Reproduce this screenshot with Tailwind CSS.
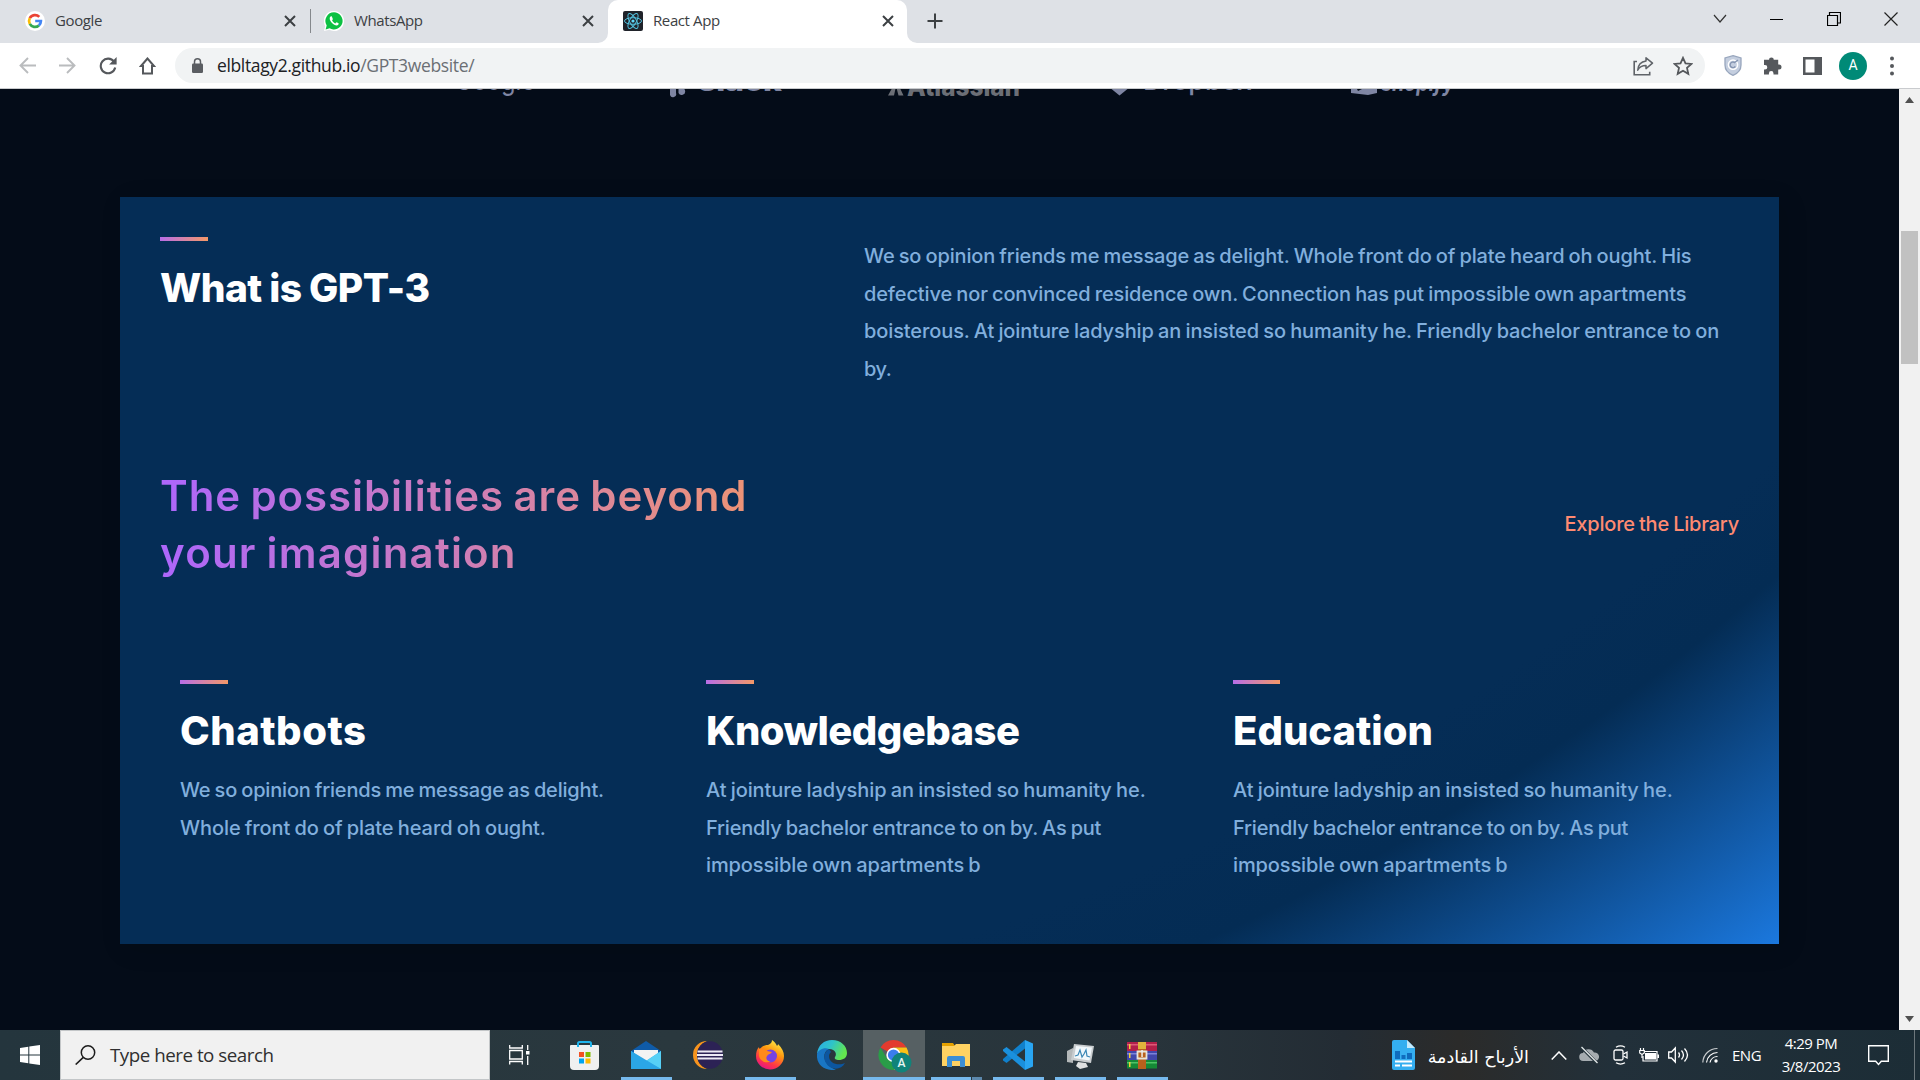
<!DOCTYPE html>
<html lang="en">
<head>
<meta charset="utf-8">
<title>React App</title>
<script src="https://cdn.jsdelivr.net/npm/@tailwindcss/browser@4"></script>
</head>
<body class="w-[1920px] h-[1080px] overflow-hidden flex flex-col bg-[#040c18] font-['Open_Sans',sans-serif]">

<!-- Tab strip -->
<header class="h-[43px] shrink-0 bg-[#dee1e6] flex justify-between text-[15px] text-[#3c4043]">
  <div class="flex">
    <div class="w-[310px] h-[42px] pl-[25px] pr-[14px] flex items-center">
      <svg class="w-5 h-5 shrink-0" viewBox="0 0 20 20"><circle cx="10" cy="10" r="10" fill="#fff"/><g fill="none" stroke-width="2.7"><path d="M14.3 5.9A5.9 5.9 0 0 0 4.8 7.2" stroke="#ea4335"/><path d="M4.8 7.2A5.9 5.9 0 0 0 4.8 12.8" stroke="#fbbc05"/><path d="M4.8 12.8A5.9 5.9 0 0 0 13.9 14.4" stroke="#34a853"/><path d="M13.9 14.4A5.9 5.9 0 0 0 15.9 10H10.2" stroke="#4285f4"/></g></svg>
      <span class="ml-[10px] mb-0.5 tracking-[-0.4px] whitespace-nowrap">Google</span>
      <svg class="ml-auto w-3 h-3" viewBox="0 0 12 12"><path d="M1 1l10 10M11 1L1 11" stroke="#3c4043" stroke-width="2"/></svg>
    </div>
    <div class="w-[298px] h-[42px] pr-[14px] flex items-center">
      <div class="w-px h-6 bg-[#85888c]"></div>
      <svg class="ml-[13px] w-5 h-5 shrink-0" viewBox="0 0 20 20"><path d="M10 0a10 10 0 1 1-4.7 18.8L0 20l1.2-5A10 10 0 0 1 10 0z" fill="#fff"/><path d="M10 1.3a8.6 8.6 0 1 1-4.4 16L1.6 18.4l1.1-4A8.6 8.6 0 0 1 10 1.300z" fill="#0cc143"/><path d="M7.200 5.300c-.6 0-1.500.8-1.500 2.200 0 3 4 6.900 7 6.900 1.300 0 2-.9 2-1.800 0-.4-1.900-1.300-2.200-1.300-.4 0-.8 1.100-1.200 1.100-.9-.2-2.900-2-3.200-3 0-.4.700-.7.700-1.200 0-.4-.8-2.700-1.100-2.900z" fill="#fff"/></svg>
      <span class="ml-[10px] mb-0.5 tracking-[-0.4px] whitespace-nowrap">WhatsApp</span>
      <svg class="ml-auto w-3 h-3" viewBox="0 0 12 12"><path d="M1 1l10 10M11 1L1 11" stroke="#3c4043" stroke-width="2"/></svg>
    </div>
    <div class="relative w-[299px] h-[43px] pb-px rounded-t-[10px] bg-white pl-[15px] pr-[13px] flex items-center">
      <svg class="absolute -left-[10px] bottom-0 w-[10px] h-[10px]" viewBox="0 0 10 10"><path d="M10 0v10H0A10 10 0 0 0 10 0z" fill="#fff"/></svg>
      <svg class="absolute -right-[10px] bottom-0 w-[10px] h-[10px]" viewBox="0 0 10 10"><path d="M0 0v10h10A10 10 0 0 1 0 0z" fill="#fff"/></svg>
      <svg class="w-5 h-5 shrink-0" viewBox="0 0 20 20"><rect width="20" height="20" rx="2" fill="#20232a"/><g fill="none" stroke="#53c1de" stroke-width="1"><ellipse cx="10" cy="10" rx="8.500" ry="3.300"/><ellipse cx="10" cy="10" rx="8.500" ry="3.300" transform="rotate(60 10 10)"/><ellipse cx="10" cy="10" rx="8.500" ry="3.300" transform="rotate(120 10 10)"/></g><circle cx="10" cy="10" r="1.600" fill="#61dafb"/></svg>
      <span class="ml-[10px] mb-0.5 tracking-[-0.4px] whitespace-nowrap">React App</span>
      <svg class="ml-auto w-3 h-3" viewBox="0 0 12 12"><path d="M1 1l10 10M11 1L1 11" stroke="#3c4043" stroke-width="2"/></svg>
    </div>
    <svg class="ml-5 mt-[13px] w-4 h-4" viewBox="0 0 16 16"><path d="M8 .5v15M.5 8h15" stroke="#3c4043" stroke-width="2"/></svg>
  </div>
  <div class="flex h-[37px] items-center pr-[22px] gap-[43px]">
    <svg class="w-[14px] h-[9px]" viewBox="0 0 14 9"><path d="M1 1l6 7 6-7" fill="none" stroke="#333" stroke-width="1.200"/></svg>
    <svg class="w-[14px] h-[14px]" viewBox="0 0 14 14"><path d="M0 7.500h13" stroke="#000"/></svg>
    <svg class="w-[14px] h-[14px]" viewBox="0 0 14 14"><path d="M.5 3.500h10v10H.5zM2.500 3V.5h11v10.500H11" fill="none" stroke="#000" stroke-width="1.200"/></svg>
    <svg class="w-[14px] h-[14px]" viewBox="0 0 14 14"><path d="M.5.5l13 13M13.500.5l-13 13" stroke="#222" stroke-width="1.200"/></svg>
  </div>
</header>

<!-- Toolbar -->
<nav class="h-[46px] shrink-0 bg-white border-b border-[#c9cbce] pt-[5px] flex">
  <div class="w-[175px] h-[35px] pl-[19px] flex items-center">
    <svg class="w-[17px] h-[17px]" viewBox="0 0 17 17"><path d="M17 8.500H1.500M9 1L1.500 8.500 9 16" fill="none" stroke="#babcbe" stroke-width="1.900"/></svg>
    <svg class="ml-[23px] w-[17px] h-[17px]" viewBox="0 0 17 17"><path d="M0 8.500h15.500M8 1l7.500 7.500L8 16" fill="none" stroke="#babcbe" stroke-width="1.900"/></svg>
    <svg class="ml-[23px] w-[18px] h-[18px]" viewBox="0 0 18 18"><path d="M15 4.700A7.300 7.300 0 1 0 16.200 10.500" fill="none" stroke="#55585c" stroke-width="2.100"/><path d="M17.600 0v7.500h-7.500z" fill="#55585c"/></svg>
    <svg class="ml-[22px] w-[17px] h-[18px]" viewBox="0 0 17 18"><path d="M8.500 1.500L2 9h2v7.500h9V9h2z" fill="none" stroke="#55585c" stroke-width="2"/></svg>
  </div>
  <div class="w-[1530px] h-[35px] rounded-full bg-[#f1f3f4] pl-[17px] pr-[12px] flex items-center">
    <svg class="w-[11px] h-4" viewBox="0 0 11 16"><rect y="5.500" width="11" height="9.500" rx="1.200" fill="#5a5d62"/><path d="M2.500 6V3.800a3 3 0 0 1 6 0V6" fill="none" stroke="#5a5d62" stroke-width="1.500"/></svg>
    <span class="ml-[14px] text-[17.5px] tracking-[-0.36px] whitespace-nowrap text-[#202124]">elbltagy2.github.io<span class="text-[#6b6f74]">/GPT3website/</span></span>
    <svg class="ml-auto w-[21px] h-[20px]" viewBox="0 0 21 20"><path d="M4 5.500H1.200v13.300h15.500v-3" fill="none" stroke="#5f6368" stroke-width="1.600"/><path d="M13 1.800l6.500 5.400-6.500 5.400V9.600c-4 0-6.500 1.400-8.300 4.600.4-5 3-8.400 8.300-9.100z" fill="none" stroke="#5f6368" stroke-width="1.500" stroke-linejoin="round"/></svg>
    <svg class="ml-[19px] w-[20px] h-[20px]" viewBox="0 0 20 20"><path d="M10 1.800l2.500 5.500 6 .6-4.500 4 1.300 6-5.300-3.100-5.300 3.100 1.300-6-4.500-4 6-.6z" fill="none" stroke="#55585c" stroke-width="1.800"/></svg>
  </div>
  <div class="ml-[19px] h-[35px] flex items-center">
    <svg class="w-[18px] h-[21px]" viewBox="0 0 18 21"><path d="M9 .7l8 2.300v7c0 5-3.500 8.500-8 10.300C4.500 18.500 1 15 1 10V3z" fill="#c4cedf" stroke="#98a6bd" stroke-width="1.300"/><circle cx="9" cy="9.700" r="4.600" fill="none" stroke="#fff" stroke-width="1.500"/><path d="M10.500 7.500a2.800 2.800 0 1 0 .8 3.800M10 8l4-3" fill="none" stroke="#8494b0" stroke-width="1.300"/></svg>
    <svg class="ml-[21px] w-[19px] h-[19px]" viewBox="0 0 19 19"><path d="M6 3.800a2.400 2.400 0 0 1 4.800 0h4.400v4.600h.8a2.500 2.500 0 0 1 0 5h-.8v5h-4.700v-1a2.300 2.300 0 0 0-4.600 0v1H1v-4.800h1a2.300 2.300 0 0 0 0-4.600H1V3.800z" fill="#55585c"/></svg>
    <svg class="ml-[21px] w-[19px] h-[18px]" viewBox="0 0 19 18"><path d="M0 0h19v18H0zM2.500 2.500v13h9v-13z" fill="#55585c" fill-rule="evenodd"/></svg>
    <div class="ml-[17px] w-7 h-7 rounded-full bg-[#008a77] text-white text-[14px] flex items-center justify-center font-['Roboto',sans-serif]">A</div>
    <svg class="ml-[23px] w-1 h-5" viewBox="0 0 4 20"><circle cx="2" cy="2.500" r="2" fill="#55585c"/><circle cx="2" cy="10" r="2" fill="#55585c"/><circle cx="2" cy="17.500" r="2" fill="#55585c"/></svg>
  </div>
</nav>

<!-- Page -->
<div class="h-[941px] shrink-0 flex">
  <main class="w-[1899px] overflow-hidden bg-[#040c18] font-['Inter',sans-serif]">
    <svg class="block w-[1899px] h-[108px]" viewBox="0 89 1899 108" font-family="Inter, sans-serif" fill="#7f86a3">
      <text x="455" y="89.500" font-size="28" textLength="80" lengthAdjust="spacingAndGlyphs">Google</text>
      <path d="M670 88h6v5a3 3 0 0 1-6 2zM678.500 88h3a3.500 3.500 0 1 1-3 5z"/>
      <text x="698" y="91" font-size="29" font-weight="800" textLength="84" lengthAdjust="spacingAndGlyphs">slack</text>
      <g fill="#6c6f76"><path d="M888 95.500l5-9h3l-2 9zM896 86h3l4.500 9.500h-5z"/><text x="907" y="95.500" font-size="28" font-weight="800" textLength="113" lengthAdjust="spacingAndGlyphs">Atlassian</text></g>
      <path d="M1111.500 89h16l-8 6.500z"/>
      <text x="1143" y="89.500" font-size="27" font-weight="500" textLength="109" lengthAdjust="spacingAndGlyphs">Dropbox</text>
      <path d="M1351 88h26v5l-9 2-17-2z"/><path d="M1357 89h5l-4 2z" fill="#040c18"/>
      <text x="1381" y="91" font-size="24" font-weight="700" font-style="italic" textLength="73" lengthAdjust="spacingAndGlyphs">shopify</text>
    </svg>

    <section class="ml-[120px] w-[1659px] h-[747px] p-10 shadow-[5px_5px_24px_rgba(0,0,0,0.12)] bg-[radial-gradient(circle_at_165px_-1332px,#052d56_0px,#052d56_2180px,#042c54_2270px,#1b78de_2560px)] flex flex-col">
      <div class="flex h-[150px]">
        <div class="w-[704px]">
          <div class="w-12 h-1 bg-[linear-gradient(103.22deg,#ae67fa_-13.86%,#f49867_99.55%)]"></div>
          <h1 class="mt-[20px] text-[39px] leading-[54px] font-extrabold tracking-[-0.55px] [word-spacing:-0.5px] text-white whitespace-nowrap">What is GPT-3</h1>
        </div>
        <p class="mt-px flex flex-col text-[20px] leading-[37.5px] font-medium text-[#81afdd] whitespace-nowrap [word-spacing:-1px]">
          <span class="tracking-[-0.14px]">We so opinion friends me message as delight. Whole front do of plate heard oh ought. His</span>
          <span class="tracking-[-0.12px]">defective nor convinced residence own. Connection has put impossible own apartments</span>
          <span class="tracking-[-0.1px]">boisterous. At jointure ladyship an insisted so humanity he. Friendly bachelor entrance to on</span>
          <span class="tracking-[-0.5px]">by.</span>
        </p>
      </div>
      <div class="mt-[81px] h-[113px] flex justify-between items-center">
        <h2 class="w-[637px] flex flex-col text-[42px] leading-[56.5px] font-semibold whitespace-nowrap [word-spacing:-2px] text-transparent bg-clip-text bg-[linear-gradient(89.97deg,#ae67fa_1.84%,#f49867_102.67%)]">
          <span class="tracking-[0.9px]">The possibilities are beyond</span>
          <span class="tracking-[1.2px]">your imagination</span>
        </h2>
        <p class="text-[20px] leading-[37.5px] font-medium tracking-[-0.2px] [word-spacing:-1px] text-[#ff8a71] whitespace-nowrap">Explore the Library</p>
      </div>
      <div class="mt-[99px] pl-5 grid grid-cols-[526px_527px_500px]">
        <article>
          <div class="w-12 h-1 bg-[linear-gradient(103.22deg,#ae67fa_-13.86%,#f49867_99.55%)]"></div>
          <h3 class="mt-[20px] text-[40px] leading-[54px] font-extrabold tracking-[0.5px] text-white whitespace-nowrap">Chatbots</h3>
          <p class="mt-[14px] flex flex-col text-[20px] leading-[37.5px] font-medium [word-spacing:-1px] text-[#81afdd] whitespace-nowrap">
            <span class="tracking-[-0.18px]">We so opinion friends me message as delight.</span>
            <span class="tracking-[-0.08px]">Whole front do of plate heard oh ought.</span>
          </p>
        </article>
        <article>
          <div class="w-12 h-1 bg-[linear-gradient(103.22deg,#ae67fa_-13.86%,#f49867_99.55%)]"></div>
          <h3 class="mt-[20px] text-[40px] leading-[54px] font-extrabold tracking-[-0.55px] text-white whitespace-nowrap">Knowledgebase</h3>
          <p class="mt-[14px] flex flex-col text-[20px] leading-[37.5px] font-medium [word-spacing:-1px] text-[#81afdd] whitespace-nowrap">
            <span class="tracking-[-0.07px]">At jointure ladyship an insisted so humanity he.</span>
            <span class="tracking-[-0.2px]">Friendly bachelor entrance to on by. As put</span>
            <span class="tracking-[-0.12px]">impossible own apartments b</span>
          </p>
        </article>
        <article>
          <div class="w-[47px] h-1 bg-[linear-gradient(103.22deg,#ae67fa_-13.86%,#f49867_99.55%)]"></div>
          <h3 class="mt-[20px] text-[40px] leading-[54px] font-extrabold tracking-[0px] text-white whitespace-nowrap">Education</h3>
          <p class="mt-[14px] flex flex-col text-[20px] leading-[37.5px] font-medium [word-spacing:-1px] text-[#81afdd] whitespace-nowrap">
            <span class="tracking-[-0.07px]">At jointure ladyship an insisted so humanity he.</span>
            <span class="tracking-[-0.2px]">Friendly bachelor entrance to on by. As put</span>
            <span class="tracking-[-0.12px]">impossible own apartments b</span>
          </p>
        </article>
      </div>
    </section>
  </main>
  <aside class="w-[21px] bg-[#f1f1f1] flex flex-col items-center">
    <svg class="mt-[8px] w-[9px] h-[6px] shrink-0" viewBox="0 0 9 6"><path d="M4.500 0L9 6H0z" fill="#505050"/></svg>
    <div class="mt-[128px] w-[17px] h-[133px] bg-[#c1c1c1]"></div>
    <svg class="mt-auto mb-[8px] w-[9px] h-[6px] shrink-0" viewBox="0 0 9 6"><path d="M4.500 6L9 0H0z" fill="#505050"/></svg>
  </aside>
</div>

<!-- Taskbar -->
<footer class="h-[50px] shrink-0 flex text-white bg-[linear-gradient(90deg,#24353d_0%,#2a383e_35%,#28343b_60%,#232c34_70%,#2b2b2a_76%,#22303a_84%,#1c2d36_100%)]">
  <div class="w-[60px] flex items-center justify-center">
    <svg class="w-5 h-5" viewBox="0 0 20 20"><path d="M0 3l8.300-1.200v7.700H0zM9.300 1.600L20 0v9.500H9.300zM0 10.500h8.300v7.700L0 17zM9.300 10.500H20V20L9.300 18.400z" fill="#fff"/></svg>
  </div>
  <div class="w-[430px] bg-[#f1f1f1] border border-[#c3c6c8] pl-[14px] flex items-center">
    <svg class="w-[21px] h-5" viewBox="0 0 21 20"><circle cx="13" cy="7.500" r="6.700" fill="none" stroke="#1c1c1c" stroke-width="1.500"/><path d="M8.300 12.300L.7 19.500" stroke="#1c1c1c" stroke-width="1.600"/></svg>
    <span class="ml-[14px] text-[18.75px] tracking-[-0.48px] whitespace-nowrap text-[#2f2f2f]">Type here to search</span>
  </div>
  <div class="w-[64px] pl-[19px] pt-[15px]">
    <svg class="w-[21px] h-5" viewBox="0 0 21 20" fill="none" stroke="#fff" stroke-width="1.300"><path d="M.7 0v3h12.600V0M.7 19.500V16.500h12.600v3M.7 5.500h12.600v8.500H.7zM18.700 0v5M18.700 11v9"/><path d="M17 6h3.500v3.500H17z" fill="#fff" stroke="none"/></svg>
  </div>

  <div class="grid grid-cols-[repeat(10,62px)] -ml-[1px]">
    <div class="flex flex-col items-center pt-[11px]">
      <svg class="w-[29px] h-[30px]" viewBox="0 0 29 30"><path d="M1 4h27a1 1 0 0 1 1 1v20a4 4 0 0 1-4 4H4a4 4 0 0 1-4-4V5a1 1 0 0 1 1-1z" fill="#f0f0f0"/><path d="M8 6V2.500A1.500 1.500 0 0 1 9.500 1h10A1.500 1.500 0 0 1 21 2.500V6" fill="none" stroke="#20b4ec" stroke-width="2"/><path d="M9 11h5v5H9z" fill="#f25022"/><path d="M15.500 11h5v5h-5z" fill="#7fba00"/><path d="M9 17.500h5v5H9z" fill="#00a4ef"/><path d="M15.500 17.500h5v5h-5z" fill="#ffb900"/></svg>
    </div>
    <div class="flex flex-col items-center justify-between pt-[11px]">
      <svg class="w-[30px] h-[29px]" viewBox="0 0 30 29"><path d="M0 10L15 0l15 10v5H0z" fill="#0f5ba8"/><path d="M3 9h24v8l-12 6L3 15z" fill="#f3f3f3"/><path d="M0 10l15 10L30 10v18H0z" fill="#2fb1ee"/><path d="M15 20L30 10v18z" fill="#57d0f6"/><path d="M0 28V10l30 18z" fill="#2ba6e6"/></svg>
      <div class="w-[51px] h-[3px] bg-[#76b9ed]"></div>
    </div>
    <div class="flex flex-col items-center pt-[11px]">
      <svg class="w-[30px] h-[28px]" viewBox="0 0 30 28"><path d="M14 0a14 14 0 0 0 0 28C7 25 4 20 4 14S7 3 14 0z" fill="#f7941e"/><ellipse cx="17" cy="14" rx="13" ry="13.800" fill="#2c2255"/><path d="M4.500 9.500h25v2h-25zM4 13h26v2H4zM4.500 16.500h25v2h-25z" fill="#eceaf4"/></svg>
    </div>
    <div class="flex flex-col items-center justify-between pt-[10px]">
      <svg class="w-[30px] h-[30px]" viewBox="0 0 30 30"><defs><linearGradient id="ff" x1=".8" y1="0" x2=".3" y2="1"><stop offset="0" stop-color="#fff44f"/><stop offset=".4" stop-color="#ff980e"/><stop offset=".75" stop-color="#ff3647"/><stop offset="1" stop-color="#e31587"/></linearGradient></defs><path d="M17 0c3 2 4 4 5 6 1-1 1-2 1-2 4 4 6 8 6 12a14 13.500 0 0 1-28 0c0-4 1-7 3-9 0 0 0 2 1 2 2-3 5-4 8-4 2-1 4-2 4-5z" fill="url(#ff)"/><circle cx="15.500" cy="16" r="6.500" fill="#7543e3"/><path d="M4 9c3-2 6 0 8 2l5 1c-1 2-4 2-5 4-2 3 1 6 4 5-5 3-11 0-12-5z" fill="#ff8a1a"/></svg>
      <div class="w-[51px] h-[3px] bg-[#76b9ed]"></div>
    </div>
    <div class="flex flex-col items-center pt-[10px]">
      <svg class="w-[30px] h-[30px]" viewBox="0 0 30 30"><defs><linearGradient id="eg" x1="0" y1="0" x2="1" y2=".4"><stop offset="0" stop-color="#2aa9e8"/><stop offset=".5" stop-color="#2fc3c9"/><stop offset="1" stop-color="#63e64e"/></linearGradient></defs><path d="M0 14C1 5 7 0 15 0c9 0 15 6 15 13 0 5-4 7-8 7-3 0-5-1-4-3 2-2 1-8-6-8C6 9 1 12 0 14z" fill="url(#eg)"/><path d="M0 14c1-4 7-7 12-5-5 2-6 8-3 13 2 4 6 6 10 8C8 31-1 25 0 14z" fill="#1976c4"/><path d="M12 9c-5 3-6 9-3 14 4 7 15 8 19 0-6 3-16 1-16-7 0-2 1-3 2-4z" fill="#0c56a0"/></svg>
    </div>
    <div class="flex flex-col items-center justify-between pt-[9px] pl-[2px] bg-[#566063]">
      <svg class="w-[34px] h-[34px]" viewBox="0 0 34 34"><path d="M15.500 16L2.500 8.500A15 15 0 0 1 28.500 8.500H15.500z" fill="#e33b2e"/><path d="M15.500 8.500h13A15 15 0 0 1 15.500 31l6.500-11z" fill="#fbc116"/><path d="M2.500 8.500A15 15 0 0 0 15.500 31L22 19.500 9 19.500z" fill="#2a9d48"/><circle cx="15.500" cy="16" r="7.200" fill="#fff"/><circle cx="15.500" cy="16" r="5.600" fill="#3b7ded"/><circle cx="23.500" cy="23.500" r="10" fill="#11837a"/><text x="23.500" y="28" text-anchor="middle" font-size="12" font-weight="500" fill="#e8f5f3" font-family="Roboto, sans-serif">A</text></svg>
      <div class="-ml-[2px] w-[62px] h-[3px] bg-[#76b9ed]"></div>
    </div>
    <div class="flex flex-col items-center justify-between pt-[13px]">
      <svg class="w-[28px] h-[24px]" viewBox="0 0 28 24"><path d="M0 0h11l2 3H0z" fill="#e5a100"/><path d="M0 3h12l2-2h14v22H0z" fill="#ffd262"/><path d="M5 24v-9a2 2 0 0 1 2-2h14a2 2 0 0 1 2 2v9h-5v-6h-8v6z" fill="#3c8ed4"/></svg>
      <div class="w-[51px] h-[3px] flex gap-px"><div class="w-[40px] bg-[#76b9ed]"></div><div class="w-[10px] bg-[#5c88ac]"></div></div>
    </div>
    <div class="flex flex-col items-center justify-between pt-[10px]">
      <svg class="w-[30px] h-[30px]" viewBox="0 0 30 30"><path d="M22 0l8 3.500v23L22 30z" fill="#29a5f2"/><path d="M22 0v8.500L3.500 23 0 20.500V19z" fill="#1080cc"/><path d="M22 30v-8.500L3.500 7 0 9.500V11z" fill="#1a90dd"/></svg>
      <div class="w-[51px] h-[3px] bg-[#76b9ed]"></div>
    </div>
    <div class="flex flex-col items-center justify-between pt-[13px]">
      <svg class="w-[28px] h-[26px]" viewBox="0 0 28 26"><path d="M1 8l6-3v15l-6-1z" fill="#b4b8b9"/><path d="M8 1l20 2-3 17L5 17z" fill="#c9cdcf"/><path d="M10 3l16 1.500-2.500 13L8 15z" fill="#f2f8fb"/><path d="M9 13l3-1 2-5 2 7 2-3 2-4 1 6 3 1" fill="none" stroke="#3b87b5" stroke-width="1.200"/><path d="M12 19l8 1 2 4-8 2-4-3z" fill="#dfe1e1"/></svg>
      <div class="w-[51px] h-[3px] bg-[#76b9ed]"></div>
    </div>
    <div class="flex flex-col items-center justify-between pt-[12px]">
      <svg class="w-[30px] h-[27px]" viewBox="0 0 30 27"><path d="M0 0h30v9H0z" fill="#b3204a"/><path d="M0 9h30v9H0z" fill="#4147ab"/><path d="M0 18h30v8.500H0z" fill="#158a36"/><path d="M0 2h30v1.500H0z" fill="#dc5b78"/><path d="M0 11h30v1.500H0z" fill="#7d82d8"/><path d="M0 20h30v1.500H0z" fill="#4fc267"/><path d="M2 2h1.500v5H2zM2 11h1.500v5H2zM2 20h1.500v5H2z" fill="#f4d13b"/><path d="M11 0h8v27h-8z" fill="#b9611c"/><path d="M11 0h8v7h-8z" fill="#e0b43c"/><path d="M10.500 9.500h9v7h-9z" fill="none" stroke="#e8e4d8" stroke-width="1.800"/><path d="M14.300 8h1.500v7h-1.500z" fill="#eee"/></svg>
      <div class="w-[51px] h-[3px] bg-[#76b9ed]"></div>
    </div>
  </div>

  <div class="ml-auto flex items-center">
    <svg class="w-[23px] h-[30px]" viewBox="0 0 23 30"><path d="M2 0h13l8 8v20a2 2 0 0 1-2 2H2a2 2 0 0 1-2-2V2a2 2 0 0 1 2-2z" fill="#34aef0"/><path d="M15 0l8 8h-8z" fill="#c5e9fb"/><path d="M3 11h5v8H3zM9.500 15h4v4h-4zM15 13h5v6h-5z" fill="#0f6cbd"/><path d="M3 21.500h17M3 25.500h5M10 25.500h10" stroke="#fff" stroke-width="1.800"/></svg>
    <span dir="rtl" class="ml-[13px] mt-1 w-[101px] text-[17.500px] whitespace-nowrap font-['DejaVu_Sans',sans-serif]">الأرباح القادمة</span>
    <svg class="ml-[22px] w-4 h-[9px]" viewBox="0 0 16 9"><path d="M.7 8.500L8 1l7.300 7.500" fill="none" stroke="#fff" stroke-width="1.500"/></svg>
    <svg class="ml-[12px] w-[20px] h-[18px]" viewBox="0 0 20 18"><path d="M4.500 15A4 4 0 0 1 4 7a6 6 0 0 1 11-.5 4.300 4.300 0 0 1 1.500 8.500z" fill="#a6acb0"/><path d="M2 1l16 16" stroke="#25343c" stroke-width="3"/><path d="M2.500 1l16 16" stroke="#e8eaeb" stroke-width="1.300"/></svg>
    <svg class="ml-[14px] w-[15px] h-[20px]" viewBox="0 0 15 20" fill="none" stroke="#fff" stroke-width="1.300"><rect x="1" y="5" width="9" height="10" rx="1.500"/><path d="M10.500 9l3.500-2v6l-3.500-2M3 2.200q4.500-2.500 9 0M3 17.800q4.500 2.500 9 0"/></svg>
    <svg class="ml-[11px] w-[20px] h-[16px]" viewBox="0 0 20 16"><path d="M5 4.500h13v9.500H4V9" fill="none" stroke="#fff" stroke-width="1.200"/><path d="M6 6h11v6.500H6zM18.500 7.500h1.500v3.500h-1.500z" fill="#fff"/><path d="M1.500 1v2.500M4.500 1v2.500M.7 3.500h4.600V6L3 7.500.7 6zM3 7v4" fill="none" stroke="#fff" stroke-width="1.200"/></svg>
    <svg class="ml-[9px] w-[21px] h-[18px]" viewBox="0 0 21 18" fill="none" stroke="#fff" stroke-width="1.300"><path d="M.7 6v6h2.800L7.300 16V2L3.500 6zM10.500 6.500q2 2.500 0 5M13.500 4.500q4 4.500 0 9M16.500 2.500q6 6.500 0 13"/></svg>
    <svg class="ml-[13px] w-[16px] h-[16px]" viewBox="0 0 16 16" fill="none" stroke="#fff" stroke-width="1.200"><path d="M.8 15.500A14.500 14.500 0 0 1 15.500 1.500" opacity=".75"/><path d="M4.500 15.500a11 11 0 0 1 11-10M8 15.500a7.500 7.500 0 0 1 7.500-6"/><circle cx="14" cy="14" r="1.700" fill="#fff" stroke="none"/></svg>
    <span class="ml-[14px] w-[30px] text-[15px] tracking-[-0.5px]">ENG</span>
    <div class="ml-[14px] w-[70px] text-center text-[15px] leading-[23px] tracking-[-0.5px] whitespace-nowrap">4:29 PM<br>3/8/2023</div>
    <svg class="ml-[22px] w-[21px] h-[21px]" viewBox="0 0 21 21"><path d="M.7.7h19.600v15.600h-7L10.500 19.500 7.700 16.300h-7z" fill="none" stroke="#fff" stroke-width="1.400"/></svg>
    <div class="ml-[25px] mr-[5px] w-px h-[50px] bg-[#6d777c]"></div>
  </div>
</footer>
</body>
</html>
